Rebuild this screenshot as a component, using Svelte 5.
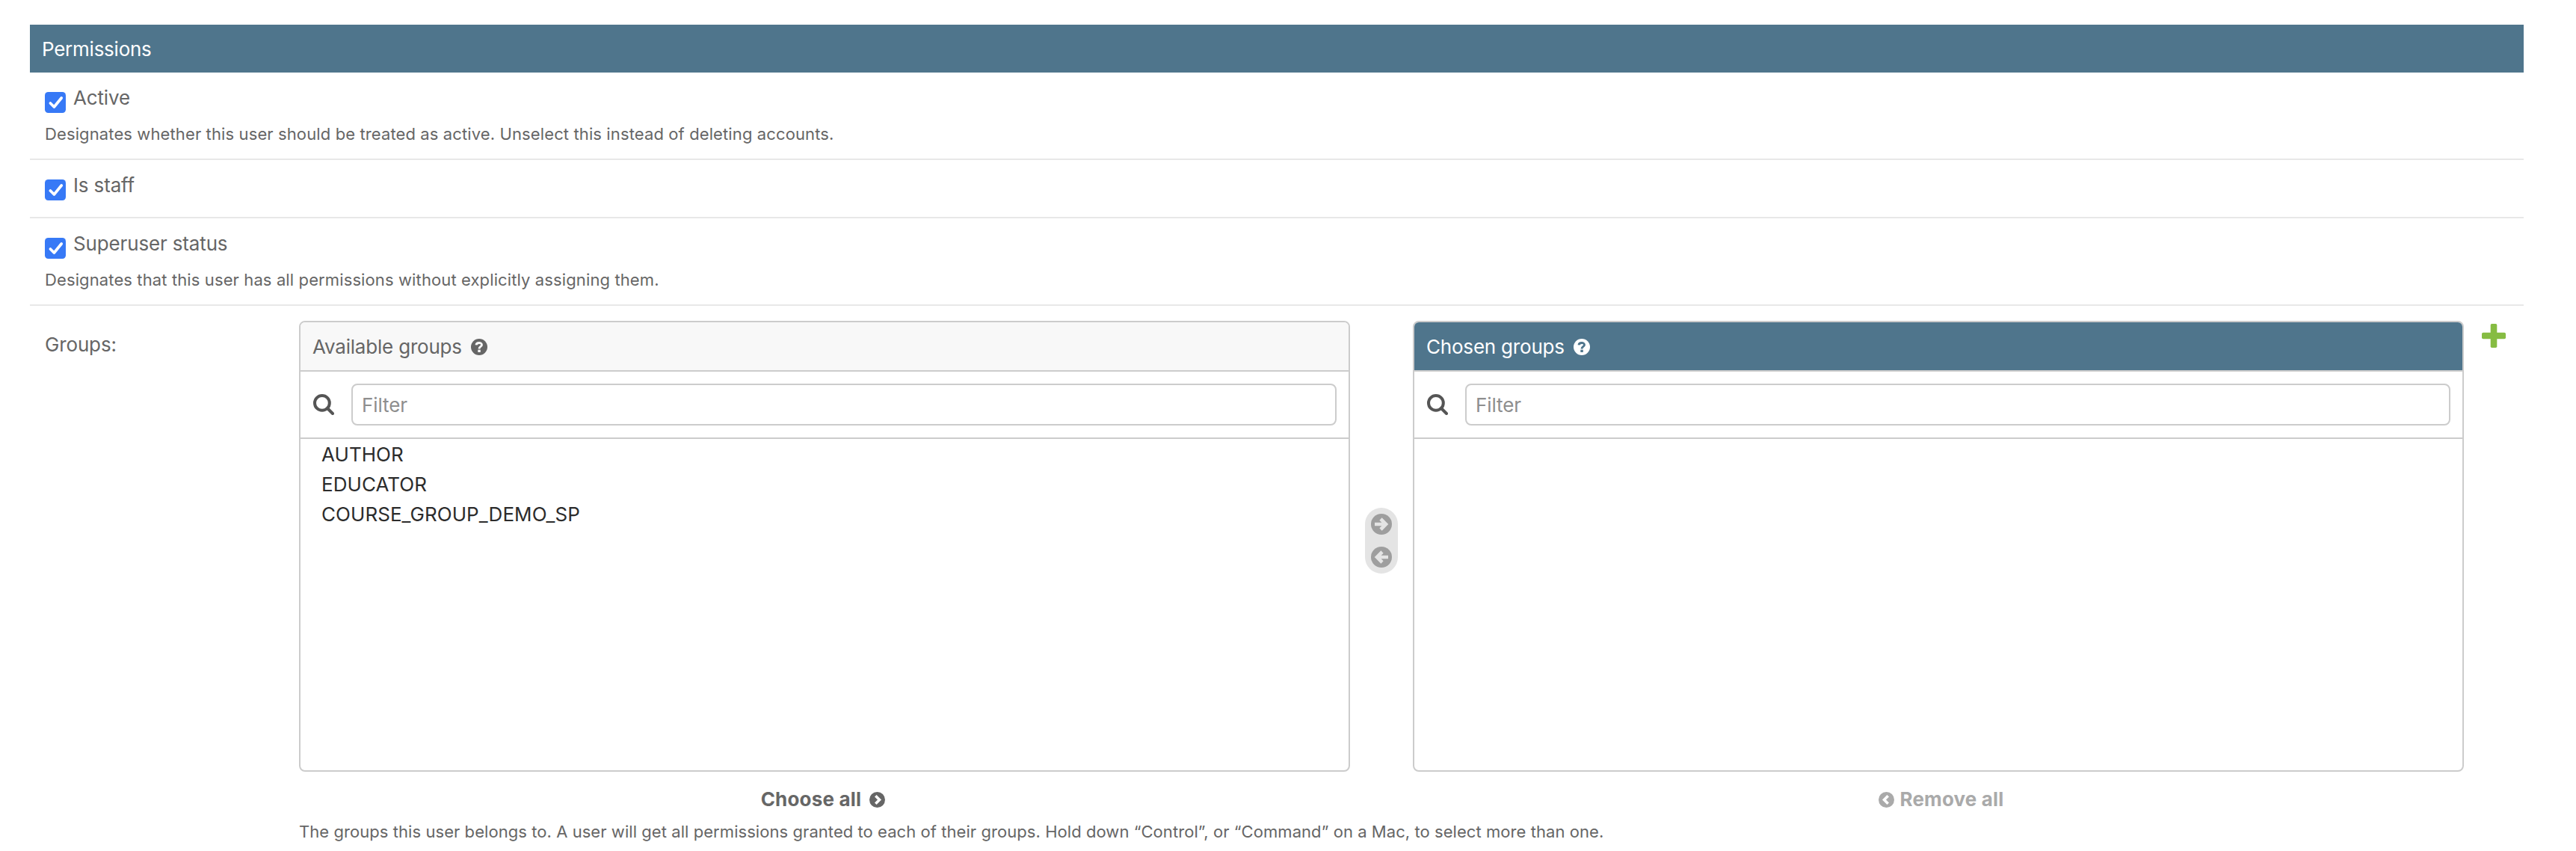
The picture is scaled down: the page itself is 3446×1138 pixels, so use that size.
<script>
  const flags = [
    {
      label: 'Active',
      help: 'Designates whether this user should be treated as active. Unselect this instead of deleting accounts.',
    },
    { label: 'Is staff' },
    {
      label: 'Superuser status',
      help: 'Designates that this user has all permissions without explicitly assigning them.',
    },
  ];
  const available = ['AUTHOR', 'EDUCATOR', 'COURSE_GROUP_DEMO_SP'];
</script>

{#snippet helpIcon()}
  <svg class="help-icon" width="22" height="22" viewBox="0 0 22 22">
    <circle cx="11" cy="11" r="11" fill="currentColor" />
    <path class="mark" d="M7 8.3C7.4 4.6 14.6 4.5 14.5 8.2C14.4 10.5 11 10.3 11 13.4" />
    <rect class="dot" x="9.3" y="14.7" width="3.5" height="3.3" />
  </svg>
{/snippet}

{#snippet filter()}
  <div class="filter">
    <svg width="28" height="28" viewBox="0 0 28 28" fill="none" stroke="#555" stroke-width="4">
      <circle cx="11.9" cy="11.9" r="9.9" />
      <path d="M19 19L26 26" stroke-linecap="round" />
    </svg>
    <input type="text" placeholder="Filter" />
  </div>
{/snippet}

<fieldset>
  <h2>Permissions</h2>

  {#each flags as flag}
    <div class="row">
      <label class="check">
        <svg width="28" height="28" viewBox="0 0 28 28">
          <rect width="28" height="28" rx="4.5" fill="#3779f6" />
          <path d="M7.4 15L12.4 20L22.2 8" fill="none" stroke="#fff" stroke-width="3.7" stroke-linecap="round" stroke-linejoin="round" />
        </svg>
        <span>{flag.label}</span>
      </label>
      {#if flag.help}<p class="help">{flag.help}</p>{/if}
    </div>
  {/each}

  <div class="groups">
    <span class="groups-label">Groups:</span>
    <div class="field">
      <div class="selector">
        <section>
          <div class="panel">
            <h3><span>Available groups</span>{@render helpIcon()}</h3>
            {@render filter()}
            <ul>
              {#each available as name}<li>{name}</li>{/each}
            </ul>
          </div>
          <div class="all choose">
            <span>Choose all</span>
            <svg width="21" height="21" viewBox="0 0 21 21">
              <circle cx="10.5" cy="10.5" r="10.5" fill="currentColor" />
              <path d="M8.3 5.3L13.5 10.5L8.3 15.7" fill="none" stroke="#fff" stroke-width="3.6" />
            </svg>
          </div>
        </section>

        <div class="mover">
          <svg width="28" height="28" viewBox="0 0 28 28">
            <circle cx="14" cy="14" r="14" fill="#9e9e9e" />
            <path d="M5 14H20M13 7L20 14L13 21" fill="none" stroke="#e4e4e4" stroke-width="4.6" />
          </svg>
          <svg width="28" height="28" viewBox="0 0 28 28">
            <circle cx="14" cy="14" r="14" fill="#9e9e9e" />
            <path d="M23 14H8M15 7L8 14L15 21" fill="none" stroke="#e4e4e4" stroke-width="4.6" />
          </svg>
        </div>

        <section>
          <div class="panel chosen">
            <h3><span>Chosen groups</span>{@render helpIcon()}</h3>
            {@render filter()}
            <ul></ul>
          </div>
          <div class="all remove">
            <svg width="21" height="21" viewBox="0 0 21 21">
              <circle cx="10.5" cy="10.5" r="10.5" fill="currentColor" />
              <path d="M12.7 5.3L7.5 10.5L12.7 15.7" fill="none" stroke="#fff" stroke-width="3.6" />
            </svg>
            <span>Remove all</span>
          </div>
        </section>

        <svg class="add" width="32" height="32" viewBox="0 0 32 32" fill="#86bc42">
          <rect x="11.7" width="8.6" height="32" rx="1.8" />
          <rect y="11.7" width="32" height="8.6" rx="1.8" />
        </svg>
      </div>
      <p class="help groups-help">The groups this user belongs to. A user will get all permissions granted to each of their groups. Hold down “Control”, or “Command” on a Mac, to select more than one.</p>
    </div>
  </div>
</fieldset>

<style>
  :global(body) {
    background: #fff;
  }
  fieldset {
    box-sizing: border-box;
    height: 1138px;
    margin: 0;
    padding: 33px 70px 0 40px;
    border: 0;
    overflow: hidden;
    color: #666;
    font: 400 26px/31px Inter, 'Open Sans', sans-serif;
    letter-spacing: -0.15px;
  }
  svg {
    display: block;
    flex: none;
  }
  h2, h3, p, ul {
    margin: 0;
    padding: 0;
    font-weight: 400;
  }
  h2 {
    padding: 17px 16px 16px;
    background: #4f758c;
    color: #fff;
    font-size: 26px;
    line-height: 31px;
    letter-spacing: -0.25px;
  }
  .row {
    padding: 20px 20px 20px;
    border-bottom: 2px solid #e8e8e8;
  }
  .check {
    display: flex;
    align-items: flex-start;
    gap: 10px;
    height: 36px;
    line-height: 27px;
  }
  .check svg {
    margin-top: 6px;
  }
  .help {
    margin-top: 13px;
    font-size: 22px;
    line-height: 26px;
    letter-spacing: 0.115px;
  }
  .groups {
    display: flex;
    padding: 20px 0 0 20px;
  }
  .groups-label {
    width: 340px;
    margin-top: 16px;
    flex: none;
  }
  .field {
    flex: 1;
  }
  .selector {
    display: flex;
    align-items: flex-start;
  }
  section {
    width: 1406px;
  }
  .panel {
    display: flex;
    flex-direction: column;
    box-sizing: border-box;
    height: 603px;
    border: 2px solid #ccc;
    border-radius: 8px;
    overflow: hidden;
  }
  h3 {
    display: flex;
    align-items: center;
    gap: 12px;
    padding: 17px 16px 16px;
    border-bottom: 2px solid #ccc;
    background: #f8f8f8;
    font-size: 26px;
    line-height: 31px;
    letter-spacing: -0.2px;
  }
  .help-icon {
    margin-top: 1px;
  }
  .mark {
    fill: none;
    stroke: #f8f8f8;
    stroke-width: 2.9;
  }
  .dot {
    fill: #f8f8f8;
  }
  .chosen h3 {
    background: #4f758c;
    color: #fff;
  }
  .chosen .mark {
    stroke: #4f758c;
  }
  .chosen .dot {
    fill: #4f758c;
  }
  .filter {
    display: flex;
    align-items: center;
    gap: 23px;
    padding: 16px 16px 16px 17px;
    border-bottom: 2px solid #ccc;
  }
  input {
    box-sizing: border-box;
    flex: 1;
    height: 56px;
    margin: 0;
    padding: 11px 12px 10px;
    border: 2px solid #ccc;
    border-radius: 8px;
    background: #fff;
    font: inherit;
    letter-spacing: -0.1px;
  }
  input::placeholder {
    color: #8e8e8e;
    opacity: 1;
  }
  ul {
    flex: 1;
    list-style: none;
    color: #2c2c2c;
    letter-spacing: 0.06px;
  }
  li {
    padding: 5px 28px 4px;
  }
  .all {
    display: flex;
    align-items: center;
    justify-content: center;
    margin-top: 21px;
    font-weight: 700;
  }
  .all svg {
    margin-top: 2px;
  }
  .choose {
    gap: 11px;
    padding-right: 4px;
    letter-spacing: 0.2px;
  }
  .remove {
    gap: 8px;
    padding-left: 7px;
    color: #aaa;
    letter-spacing: 0.15px;
  }
  .mover {
    display: flex;
    flex-direction: column;
    gap: 16px;
    margin: 250px 20px 0;
    padding: 8px;
    border-radius: 22px;
    background: #e4e4e4;
  }
  .add {
    margin: 4px 0 0 24px;
  }
  .groups-help {
    margin-top: 15px;
    letter-spacing: 0.06px;
  }
</style>
